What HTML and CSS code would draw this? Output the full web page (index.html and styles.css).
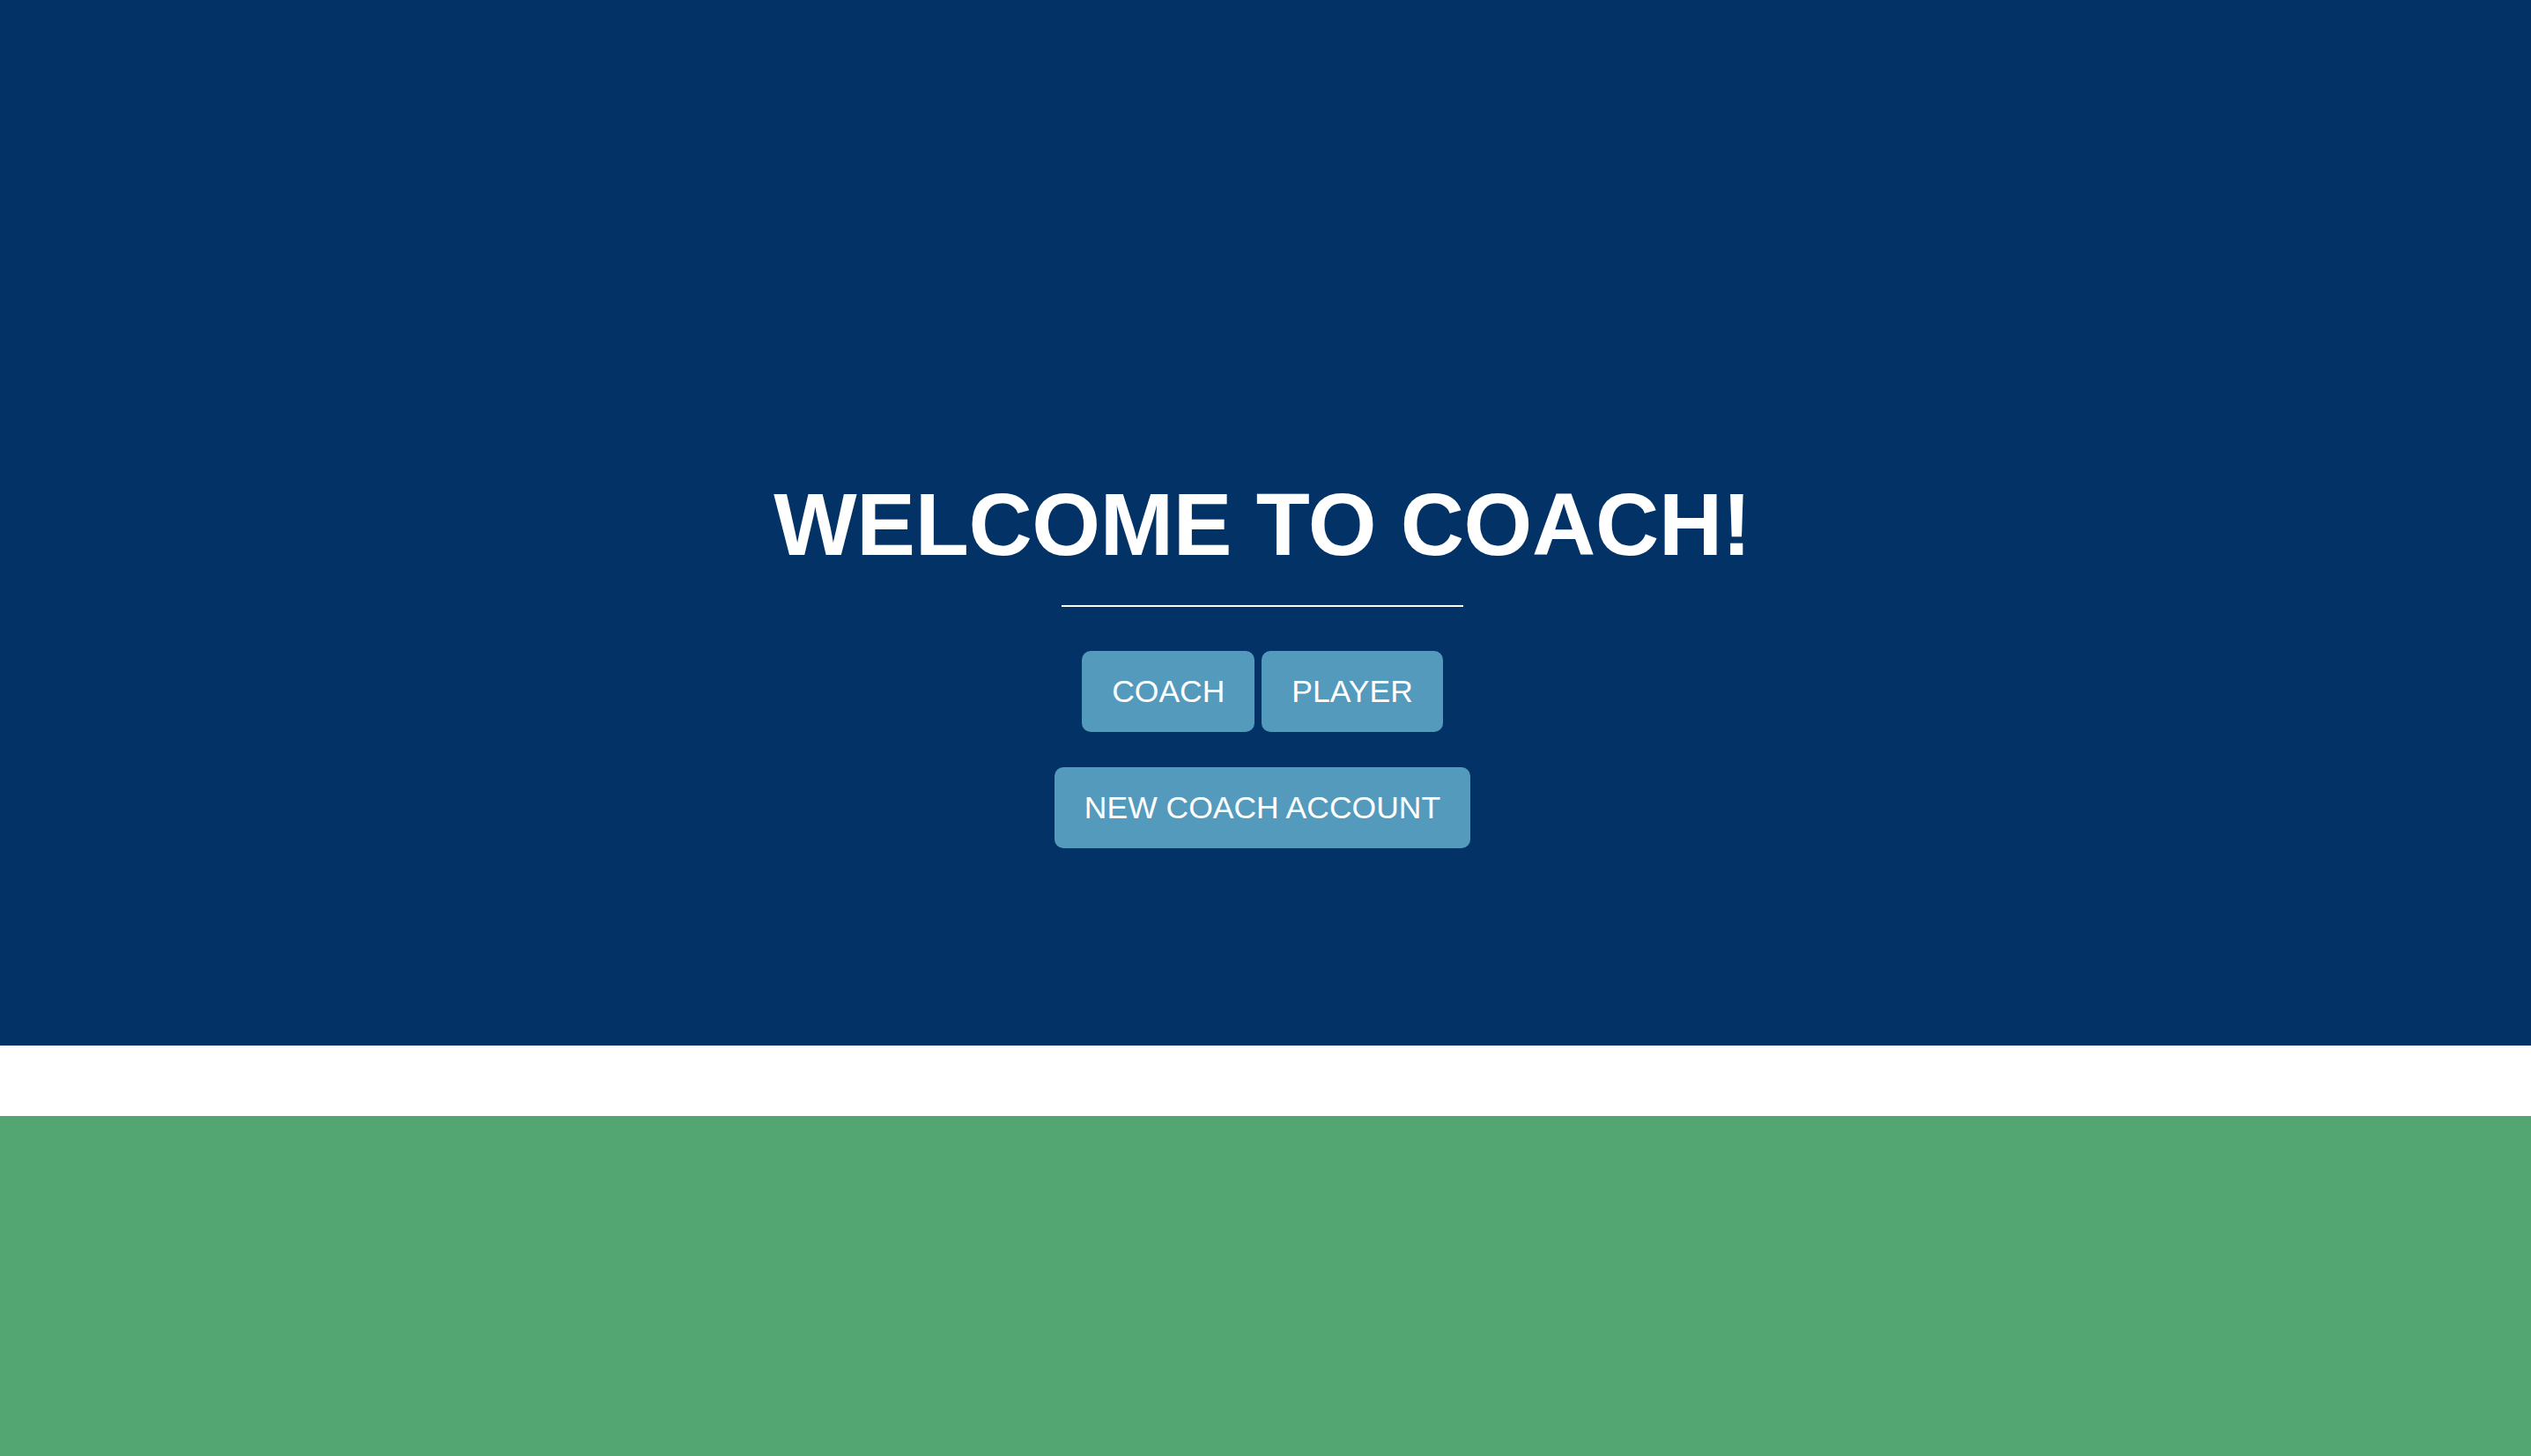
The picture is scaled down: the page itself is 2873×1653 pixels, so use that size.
FILE: index.html
```html
<!DOCTYPE html>
<html lang="en">
<head>
<meta charset="utf-8">
<title>Welcome to Coach!</title>
<link rel="stylesheet" href="styles.css">
</head>
<body>
  <header class="hero">
    <h1 class="hero-title">WELCOME TO COACH!</h1>
    <hr class="hero-rule">
    <div class="btn-row">
      <a class="btn" href="#">COACH</a>
      <a class="btn" href="#">PLAYER</a>
    </div>
    <div class="btn-row btn-row-second">
      <a class="btn" href="#">NEW COACH ACCOUNT</a>
    </div>
  </header>
  <div class="spacer"></div>
  <footer class="field"></footer>
</body>
</html>
```

FILE: styles.css
```css
html, body {
  margin: 0;
  padding: 0;
}

body {
  font-family: "Liberation Sans", Arial, Helvetica, sans-serif;
  background: #ffffff;
}

.hero {
  box-sizing: border-box;
  height: 1187px;
  background: #033266;
  display: flex;
  flex-direction: column;
  align-items: center;
  padding: 540px 7px 0 0;
}

.hero-title {
  margin: 0;
  font-size: 100px;
  line-height: 110px;
  font-weight: 700;
  color: #ffffff;
  letter-spacing: -0.3px;
}

.hero-rule {
  margin: 37px 0 0 0;
  width: 456px;
  height: 2px;
  border: 0;
  background: #ffffff;
}

.btn-row {
  display: flex;
  gap: 8px;
  margin-top: 50px;
}

.btn-row-second {
  margin-top: 40px;
}

.btn {
  box-sizing: border-box;
  height: 92px;
  padding: 0 34px;
  display: flex;
  align-items: center;
  background: #549abd;
  color: #ffffff;
  font-size: 35.5px;
  text-decoration: none;
  border-radius: 10px;
}

.spacer {
  height: 80px;
  background: #ffffff;
}

.field {
  height: 386px;
  background: #53a572;
}
```
